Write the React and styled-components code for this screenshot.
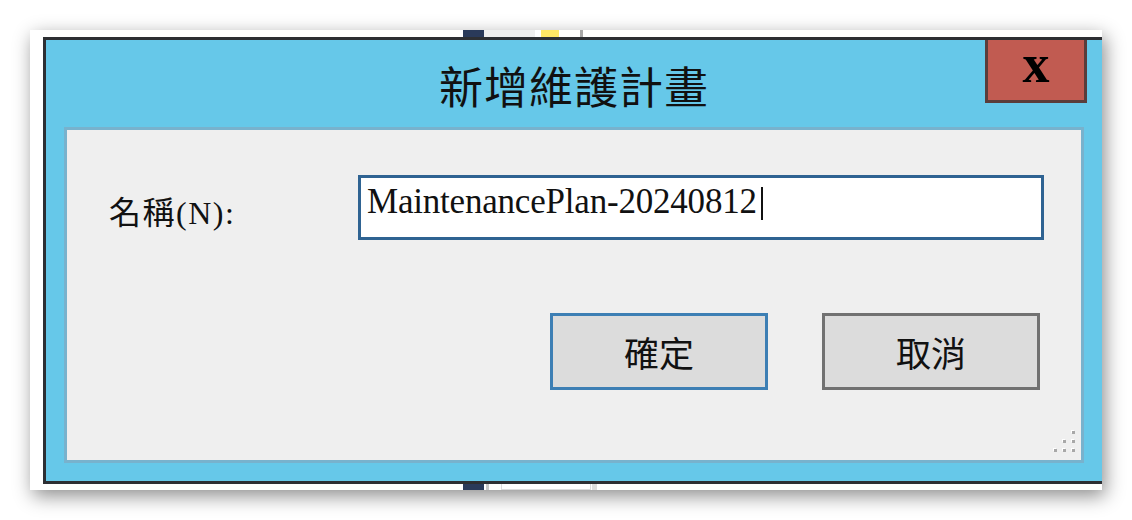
import React from "react";
import styled, { createGlobalStyle } from "styled-components";

const CJK = `"Noto Sans CJK TC", "Noto Sans", sans-serif`;
const SERIF_CJK = `"Liberation Serif", "Noto Sans CJK TC", serif`;

const GlobalStyle = createGlobalStyle`
  html, body {
    margin: 0;
    padding: 0;
    background: #ffffff;
  }
  body {
    font-family: ${CJK};
  }
`;

const Page = styled.div`
  padding: 30px 0 0 30px;
  width: 1132px;
  height: 520px;
  box-sizing: border-box;
`;

const Frame = styled.div`
  width: 1072px;
  height: 460px;
  background: #ffffff;
  display: flex;
  flex-direction: column;
  box-shadow: 3px 6px 18px rgba(0, 0, 0, 0.45);
`;

const Strip = styled.div`
  height: ${({ $height }) => $height}px;
  display: flex;
  padding-left: 433px;
  flex-shrink: 0;
`;

const StripPiece = styled.div`
  width: ${({ $width }) => $width}px;
  margin-left: ${({ $gap }) => $gap || 0}px;
  background: ${({ $color }) => $color};
  box-sizing: border-box;
  border: ${({ $border }) => $border || "none"};
  border-top: none;
`;

const Dialog = styled.div`
  flex: 1;
  margin-left: 13px;
  background: #66c8e9;
  border: 3px solid #2d2f33;
  border-right: none;
  display: flex;
  flex-direction: column;
`;

const TitleBar = styled.div`
  height: 87px;
  display: grid;
  grid-template-columns: 1fr auto 1fr;
  align-items: start;
`;

const Title = styled.div`
  grid-column: 2;
  align-self: center;
  font-family: ${CJK};
  font-size: 44px;
  line-height: 1;
  color: #111;
  letter-spacing: 1px;
  padding-top: 2px;
`;

const CloseButton = styled.div`
  grid-column: 3;
  justify-self: end;
  margin-right: 15px;
  width: 102px;
  height: 63px;
  box-sizing: border-box;
  background: #c15b51;
  border: 3px solid #5a3d3b;
  border-top: none;
  display: flex;
  align-items: center;
  justify-content: center;
  font-family: "Liberation Serif", serif;
  font-weight: 700;
  font-size: 54px;
  line-height: 1;
  color: #000;
  padding-bottom: 12px;
`;

const Panel = styled.div`
  position: relative;
  flex: 1;
  margin: 0 18px 18px 18px;
  background: #efefef;
  border: 3px solid #78b2cd;
  padding: 45px 37px 0 42px;
  display: flex;
  flex-direction: column;
`;

const FieldRow = styled.div`
  display: grid;
  grid-template-columns: 249px 1fr;
  align-items: center;
  height: 65px;
`;

const Label = styled.label`
  font-family: ${SERIF_CJK};
  font-size: 32px;
  color: #111;
  padding-top: 4px;
  letter-spacing: 1.5px;
`;

const TextBox = styled.div`
  height: 65px;
  box-sizing: border-box;
  background: #ffffff;
  border: 3px solid #2f6392;
  padding: 5px 0 0 6px;
  font-family: "Liberation Serif", serif;
  font-size: 35px;
  letter-spacing: -0.2px;
  line-height: 1.1;
  color: #111;
  display: flex;
  align-items: flex-start;
`;

const Caret = styled.span`
  display: inline-block;
  width: 2px;
  height: 33px;
  margin-top: 4px;
  margin-left: 4px;
  background: #111;
`;

const ButtonRow = styled.div`
  display: flex;
  justify-content: flex-end;
  gap: 54px;
  margin-top: 73px;
  padding-right: 4px;
`;

const Button = styled.div`
  width: 218px;
  height: 77px;
  box-sizing: border-box;
  background: #dcdcdc;
  border: 3px solid ${({ $primary }) => ($primary ? "#3d7fb4" : "#717171")};
  display: flex;
  align-items: center;
  justify-content: center;
  font-family: ${CJK};
  font-size: 35px;
  color: #111;
`;

const Grip = styled.svg`
  position: absolute;
  right: 6px;
  bottom: 6px;
`;

const ResizeGrip = () => (
  <Grip width="26" height="26" viewBox="0 0 26 26">
    {[
      [22, 2],
      [13, 11],
      [22, 11],
      [4, 20],
      [13, 20],
      [22, 20],
    ].map(([x, y]) => (
      <g key={`${x}-${y}`}>
        <rect x={x} y={y} width="3" height="3" fill="#ffffff" />
        <rect x={x + 1} y={y + 1} width="3" height="3" fill="#a8a8a8" />
      </g>
    ))}
  </Grip>
);

export default function App() {
  return (
    <>
      <GlobalStyle />
      <Page>
        <Frame>
          <Strip $height={7}>
            <StripPiece $width={21} $color="#2a3a5a" />
            <StripPiece $width={51} $color="#efefef" />
            <StripPiece $width={18} $gap={6} $color="#ffe866" />
            <StripPiece $width={3} $gap={21} $color="#a8a8a8" />
          </Strip>
          <Dialog>
            <TitleBar>
              <Title>新增維護計畫</Title>
              <CloseButton>x</CloseButton>
            </TitleBar>
            <Panel>
              <FieldRow>
                <Label>名稱(N):</Label>
                <TextBox>
                  <span>MaintenancePlan-20240812</span>
                  <Caret />
                </TextBox>
              </FieldRow>
              <ButtonRow>
                <Button $primary>確定</Button>
                <Button>取消</Button>
              </ButtonRow>
              <ResizeGrip />
            </Panel>
          </Dialog>
          <Strip $height={6}>
            <StripPiece $width={21} $color="#2a3a5a" />
            <StripPiece $width={3} $gap={2} $color="#c8c8c8" />
            <StripPiece $width={90} $gap={12} $color="#ffffff" $border="1px solid #dcdcdc" />
            <StripPiece $width={5} $gap={1} $color="#dddddd" />
          </Strip>
        </Frame>
      </Page>
    </>
  );
}
